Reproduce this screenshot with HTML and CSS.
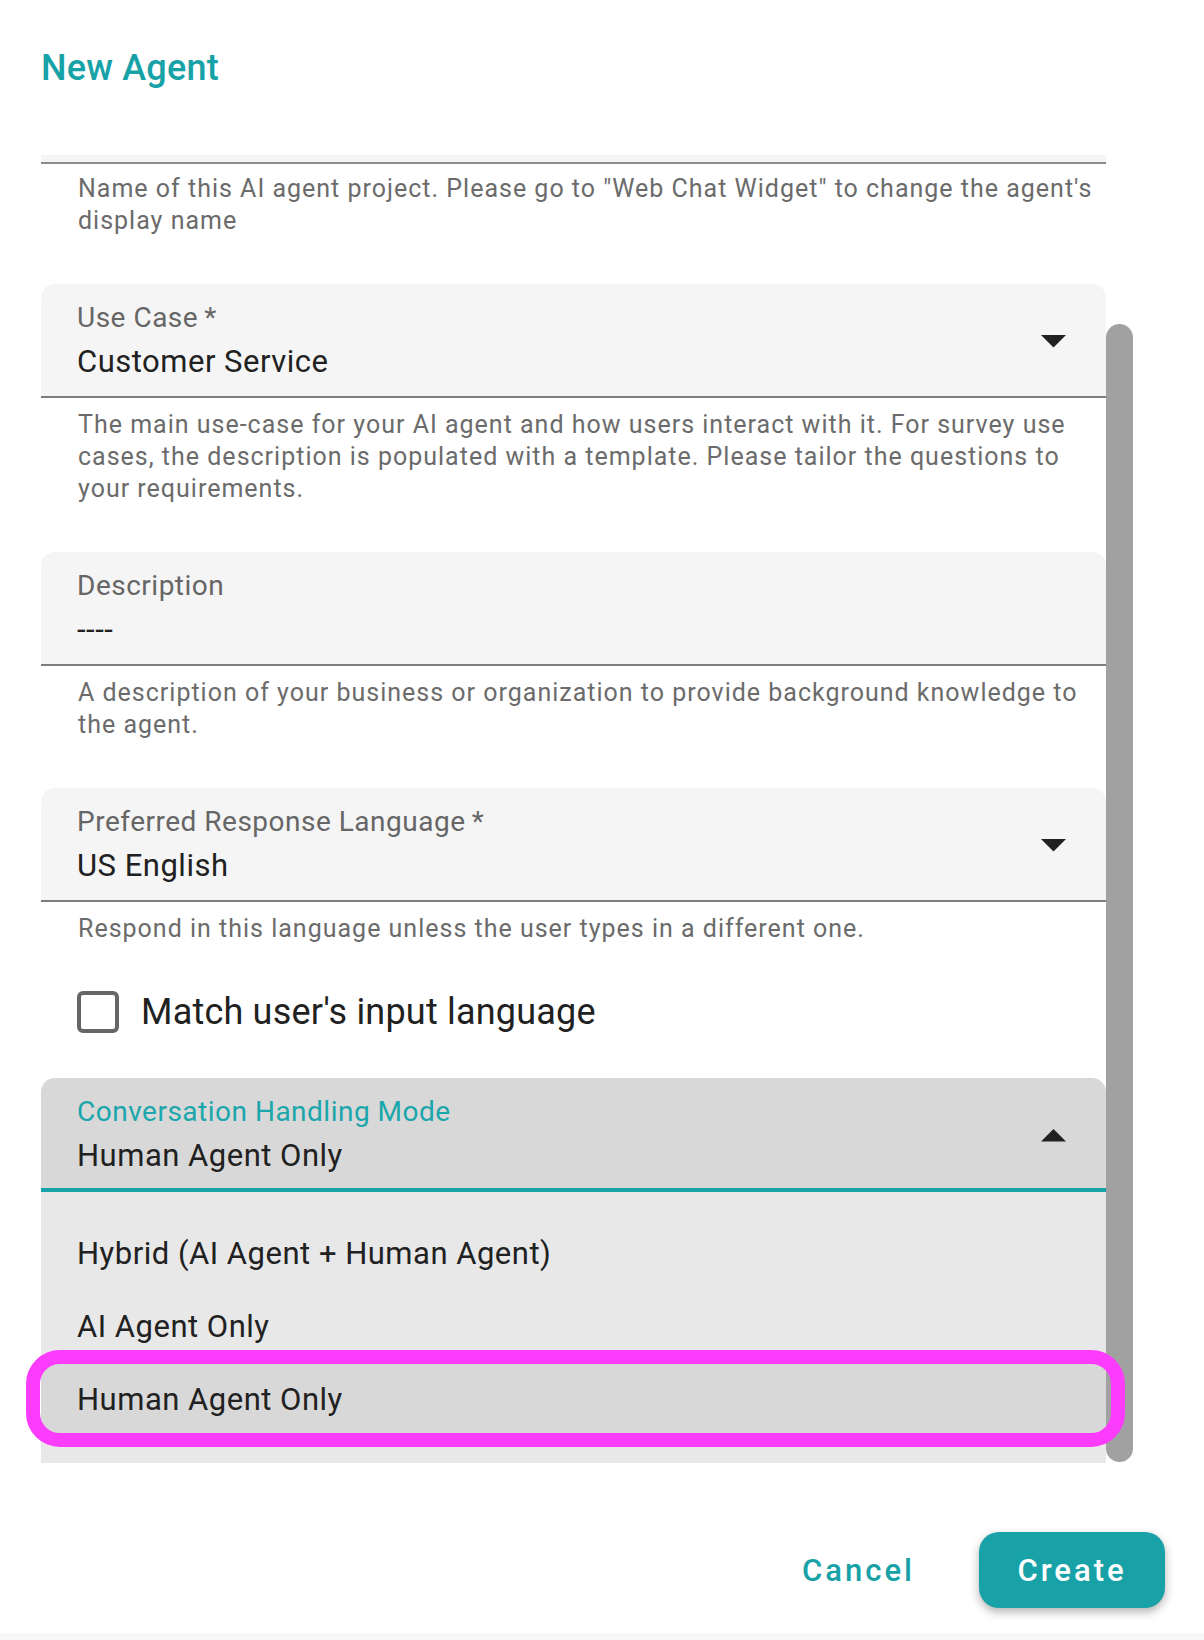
FILE: index.html
```html
<!DOCTYPE html>
<html lang="en">
<head>
<meta charset="utf-8">
<title>New Agent</title>
<link rel="stylesheet" href="styles.css">
</head>
<body>
<div class="dialog">
  <h1 class="title">New Agent</h1>

  <div class="scroll-area">
    <div class="form">
      <div class="field field-cut"></div>
      <p class="helper helper-first">Name of this AI agent project. Please go to "Web Chat Widget" to change the agent's display name</p>

      <div class="field">
        <div class="field-text">
          <div class="label">Use Case<span class="req">&thinsp;*</span></div>
          <div class="value">Customer Service</div>
        </div>
        <svg class="arrow" width="25" height="13" viewBox="0 0 25 13"><polygon points="0,0 25,0 12.5,12.5" fill="#212121"/></svg>
      </div>
      <p class="helper">The main use-case for your AI agent and how users interact with it. For survey use cases, the description is populated with a template. Please tailor the questions to your requirements.</p>

      <div class="field">
        <div class="field-text">
          <div class="label">Description</div>
          <div class="value">----</div>
        </div>
      </div>
      <p class="helper">A description of your business or organization to provide background knowledge to the agent.</p>

      <div class="field">
        <div class="field-text">
          <div class="label">Preferred Response Language<span class="req">&thinsp;*</span></div>
          <div class="value">US English</div>
        </div>
        <svg class="arrow" width="25" height="13" viewBox="0 0 25 13"><polygon points="0,0 25,0 12.5,12.5" fill="#212121"/></svg>
      </div>
      <p class="helper">Respond in this language unless the user types in a different one.</p>

      <label class="check-row">
        <span class="checkbox"></span>
        <span class="check-label">Match user's input language</span>
      </label>

      <div class="field field-focused">
        <div class="field-text">
          <div class="label">Conversation Handling Mode</div>
          <div class="value">Human Agent Only</div>
        </div>
        <svg class="arrow" width="25" height="13" viewBox="0 0 25 13"><polygon points="0,12.5 25,12.5 12.5,0" fill="#212121"/></svg>
      </div>
      <ul class="menu">
        <li class="menu-item">Hybrid (AI Agent + Human Agent)</li>
        <li class="menu-item">AI Agent Only</li>
        <li class="menu-item menu-item-selected">Human Agent Only<span class="highlight"></span></li>
      </ul>
    </div>
    <div class="scrollbar"><div class="thumb"></div></div>
  </div>

  <div class="actions">
    <button class="btn btn-text">Cancel</button>
    <button class="btn btn-primary">Create</button>
  </div>
  <div class="bottom-strip"></div>
</div>
</body>
</html>
```

FILE: styles.css
```css
* {
  box-sizing: border-box;
}

html, body {
  margin: 0;
  padding: 0;
  background: #ffffff;
}

body {
  font-family: Roboto, "Noto Sans", "Liberation Sans", sans-serif;
  color: #212121;
}

.dialog {
  width: 1204px;
  height: 1640px;
  display: flex;
  flex-direction: column;
}

.title {
  margin: 50px 0 0 41px;
  font-size: 36px;
  line-height: 36px;
  font-weight: 500;
  letter-spacing: 0.2px;
  color: #17a2a7;
}

.scroll-area {
  margin-top: 69px;
  margin-left: 41px;
  display: flex;
  align-items: flex-start;
}

.form {
  width: 1065px;
}

.scrollbar {
  width: 27px;
  padding-top: 169px;
}

.thumb {
  width: 27px;
  height: 1138px;
  background: #a1a1a1;
  border-radius: 14px;
}

.field {
  display: flex;
  align-items: center;
  background: #f5f5f5;
  border-top-left-radius: 14px;
  border-top-right-radius: 14px;
  border-bottom: 2px solid #7d7d7d;
  padding: 17px 40px 14px 36px;
  margin-top: 47px;
}

.field-cut {
  height: 9px;
  padding: 0;
  margin-top: 0;
  border-radius: 0;
  border-bottom: 2px solid #8a8a8a;
}

.field-text {
  flex: 1;
}

.label {
  font-size: 28px;
  line-height: 34px;
  letter-spacing: 0.5px;
  color: #666666;
}

.req {
  color: #666666;
}

.value {
  margin-top: 7px;
  font-size: 31px;
  line-height: 40px;
  letter-spacing: 0.5px;
  color: #212121;
}

.arrow {
  display: block;
  flex: none;
}

.helper {
  margin: 0;
  padding: 11px 4px 0 37px;
  font-size: 25px;
  line-height: 32px;
  letter-spacing: 1px;
  color: #6b6b6b;
}

.helper-first {
  padding-top: 9px;
}

.check-row {
  display: flex;
  align-items: center;
  margin-top: 46px;
  padding-left: 36px;
}

.checkbox {
  width: 42px;
  height: 42px;
  border: 4px solid #666666;
  border-radius: 6px;
  flex: none;
}

.check-label {
  margin-left: 22px;
  font-size: 36px;
  line-height: 42px;
  letter-spacing: 0.2px;
  color: #212121;
}

.field-focused {
  margin-top: 45px;
  background: #d8d8d8;
  border-bottom: 4px solid #17a2a7;
  padding-bottom: 12px;
}

.field-focused .label {
  color: #1aa6ab;
}

.menu {
  list-style: none;
  margin: 0;
  padding: 25px 0 27px;
  background: #e8e8e8;
}

.menu-item {
  position: relative;
  height: 73px;
  line-height: 73px;
  padding-left: 36px;
  font-size: 31px;
  letter-spacing: 0.5px;
  color: #212121;
}

.menu-item-selected {
  background: #d8d8d8;
}

.highlight {
  position: absolute;
  left: -15px;
  top: -13px;
  right: -19px;
  bottom: -11px;
  border: 14px solid #fc3cfc;
  border-radius: 34px;
}

.actions {
  display: flex;
  justify-content: flex-end;
  align-items: center;
  margin-top: 69px;
  padding-right: 39px;
}

.btn {
  font-family: Roboto, "Noto Sans", "Liberation Sans", sans-serif;
  font-size: 31px;
  font-weight: 500;
  letter-spacing: 3px;
  border: none;
  height: 76px;
  cursor: pointer;
}

.btn-text {
  background: transparent;
  color: #17a2a7;
  padding: 0 18px;
  margin-right: 46px;
}

.btn-primary {
  width: 186px;
  background: #18a2a8;
  color: #ffffff;
  border-radius: 20px;
  box-shadow: 0 4px 10px rgba(0, 0, 0, 0.3);
  padding: 0;
}

.bottom-strip {
  margin-top: auto;
  height: 7px;
  background: #f8f8f8;
}
```
